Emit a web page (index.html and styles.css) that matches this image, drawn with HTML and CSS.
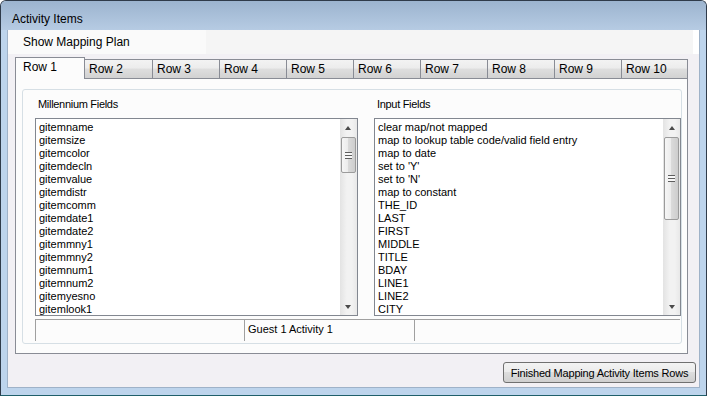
FILE: index.html
```html
<!DOCTYPE html>
<html>
<head>
  <title>Activity Items</title>
  <meta charset="utf-8" />
  <link rel="stylesheet" href="styles.css">
</head>
<body>
  <div class="window">
    <div class="titlebar">Activity Items</div>

    <div class="client">
      <div class="menubar">
        <span class="menu-item">Show Mapping Plan</span>
      </div>

      <div class="tabs">
        <div class="tab active">Row 1</div>
        <div class="tab">Row 2</div>
        <div class="tab">Row 3</div>
        <div class="tab">Row 4</div>
        <div class="tab">Row 5</div>
        <div class="tab">Row 6</div>
        <div class="tab">Row 7</div>
        <div class="tab">Row 8</div>
        <div class="tab">Row 9</div>
        <div class="tab last">Row 10</div>
      </div>

      <div class="tab-panel">
        <div class="group">
          <div class="columns">
            <div class="column left">
              <div class="label">Millennium Fields</div>
              <div class="listbox">
                <ul class="items">
                  <li>gitemname</li>
                  <li>gitemsize</li>
                  <li>gitemcolor</li>
                  <li>gitemdecln</li>
                  <li>gitemvalue</li>
                  <li>gitemdistr</li>
                  <li>gitemcomm</li>
                  <li>gitemdate1</li>
                  <li>gitemdate2</li>
                  <li>gitemmny1</li>
                  <li>gitemmny2</li>
                  <li>gitemnum1</li>
                  <li>gitemnum2</li>
                  <li>gitemyesno</li>
                  <li>gitemlook1</li>
                </ul>
                <div class="scrollbar">
                  <div class="arrow up"></div>
                  <div class="track">
                    <div class="thumb short"><span class="grip"></span></div>
                  </div>
                  <div class="arrow down"></div>
                </div>
              </div>
            </div>

            <div class="column right">
              <div class="label">Input Fields</div>
              <div class="listbox">
                <ul class="items">
                  <li>clear map/not mapped</li>
                  <li>map to lookup table code/valid field entry</li>
                  <li>map to date</li>
                  <li>set to 'Y'</li>
                  <li>set to 'N'</li>
                  <li>map to constant</li>
                  <li>THE_ID</li>
                  <li>LAST</li>
                  <li>FIRST</li>
                  <li>MIDDLE</li>
                  <li>TITLE</li>
                  <li>BDAY</li>
                  <li>LINE1</li>
                  <li>LINE2</li>
                  <li>CITY</li>
                </ul>
                <div class="scrollbar">
                  <div class="arrow up"></div>
                  <div class="track">
                    <div class="thumb long"><span class="grip"></span></div>
                  </div>
                  <div class="arrow down"></div>
                </div>
              </div>
            </div>
          </div>

          <div class="status">
            <div class="cell first"></div>
            <div class="cell second">Guest 1 Activity 1</div>
            <div class="cell third"></div>
          </div>
        </div>
      </div>

      <div class="footer">
        <button class="button">Finished Mapping Activity Items Rows</button>
      </div>
    </div>
  </div>
</body>
</html>
```

FILE: styles.css
```css
body {
  margin: 0;
  padding: 0;
  background: #ffffff;
  font-family: "Liberation Sans", Arial, sans-serif;
  font-size: 11px;
  color: #000;
}

.window {
  width: 707px;
  height: 396px;
  box-sizing: border-box;
  display: flex;
  flex-direction: column;
  border: 1px solid #2f3b4a;
  border-bottom-color: #1f5f6a;
  border-radius: 6px 6px 0 0;
  background: #bdd4ec;
  padding: 0 7px 7px 7px;
}

.titlebar {
  height: 29px;
  margin: 0 -7px;
  padding-left: 11px;
  line-height: 36px;
  font-size: 12px;
  background: linear-gradient(#9cb4cf, #b6cbe3);
  border-radius: 5px 5px 0 0;
}

.client {
  flex: 1;
  display: flex;
  flex-direction: column;
  background: #f2f0f4;
  border: 1px solid #9fb2c8;
  border-top: none;
  margin: 0 -1px;
}

/* menu strip */
.menubar {
  height: 24px;
  display: flex;
  background: linear-gradient(to right, #fafafa 0, #fafafa 198px, #f5f5f5 198px, #f5f5f5 685px, #ffffff 685px);
}

.menu-item {
  width: 184px;
  padding-left: 15px;
  line-height: 24px;
  font-size: 12px;
}

/* tabs */
.tabs {
  display: flex;
  align-items: flex-end;
  height: 21px;
  margin: 3px 0 0 7px;
  position: relative;
  z-index: 1;
}

.tab {
  width: 67px;
  height: 19px;
  box-sizing: border-box;
  padding-left: 4px;
  line-height: 19px;
  font-size: 12px;
  border: 1px solid #898c95;
  border-right: none;
  border-bottom: none;
  background: linear-gradient(#f3f3f3 0%, #ececec 45%, #dedede 50%, #d2d2d2 100%);
}

.tab.last {
  border-right: 1px solid #898c95;
}

.tab.active {
  width: 70px;
  height: 22px;
  margin-bottom: -1px;
  padding-left: 7px;
  line-height: 19px;
  background: #fcfcfc;
  border-right: 1px solid #898c95;
}

.tab.active + .tab {
  border-left: none;
}

.tab-panel {
  height: 276px;
  box-sizing: border-box;
  margin: 0 11px 0 7px;
  border: 1px solid #898c95;
  background: #fcfcfc;
  padding: 10px 5px 9px 6px;
}

.group {
  height: 100%;
  box-sizing: border-box;
  border: 1px solid #d6dfe5;
  border-radius: 3px;
  padding: 7px 0 0 12px;
}

.columns {
  display: flex;
  gap: 16px;
}

.column.left {
  width: 324px;
}

.column.right {
  width: 308px;
}

.label {
  height: 21px;
  line-height: 14px;
  padding-left: 3px;
  letter-spacing: -0.3px;
}

/* list boxes */
.listbox {
  display: flex;
  height: 198px;
  box-sizing: border-box;
  border: 1px solid #828790;
  background: #fff;
}

.items {
  flex: 1;
  list-style: none;
  margin: 0;
  padding: 2px 3px;
  line-height: 13px;
  white-space: nowrap;
  overflow: hidden;
}

.scrollbar {
  width: 17px;
  display: flex;
  flex-direction: column;
  background: linear-gradient(to right, #e3e3e3, #f2f2f2 40%, #f2f2f2 70%, #e8e8e8);
}

.arrow {
  height: 17px;
  display: flex;
  align-items: center;
  justify-content: center;
}

.arrow::after {
  content: "";
  width: 0;
  height: 0;
  border-left: 3px solid transparent;
  border-right: 3px solid transparent;
}

.arrow.up::after {
  border-bottom: 4px solid #4a4a4a;
}

.arrow.down::after {
  border-top: 4px solid #4a4a4a;
}

.track {
  flex: 1;
}

.thumb {
  box-sizing: border-box;
  margin: 1px 0 0 1px;
  width: 15px;
  display: flex;
  align-items: center;
  justify-content: center;
  border: 1px solid #9b9b9b;
  border-radius: 2px;
  background: linear-gradient(to right, #f6f6f6, #ebebeb 50%, #dadada 50%, #cdcdcd);
}

.thumb.short {
  height: 36px;
}

.thumb.long {
  height: 83px;
}

.grip {
  width: 7px;
  height: 7px;
  background: repeating-linear-gradient(#5e5e5e 0, #5e5e5e 1px, #f8f8f8 1px, #f8f8f8 3px);
}

/* status cells under the lists */
.status {
  display: flex;
  height: 21px;
  margin-top: 3px;
  margin-right: 1px;
  border-top: 1px solid #a0a0a0;
}

.cell {
  border-left: 1px solid #a0a0a0;
  padding: 2px 0 0 3px;
  line-height: 14px;
}

.cell.first {
  width: 205px;
}

.cell.second {
  width: 166px;
}

.cell.third {
  flex: 1;
}

/* bottom button */
.footer {
  display: flex;
  justify-content: flex-end;
  padding: 8px 3px 0 0;
}

.button {
  width: 193px;
  height: 21px;
  padding: 0;
  font-family: "Liberation Sans", Arial, sans-serif;
  font-size: 11px;
  letter-spacing: -0.2px;
  color: #000;
  border: 1px solid #707070;
  border-radius: 3px;
  background: linear-gradient(#f3f3f3 0%, #ebebeb 48%, #dddddd 50%, #cfcfcf 100%);
}
```
